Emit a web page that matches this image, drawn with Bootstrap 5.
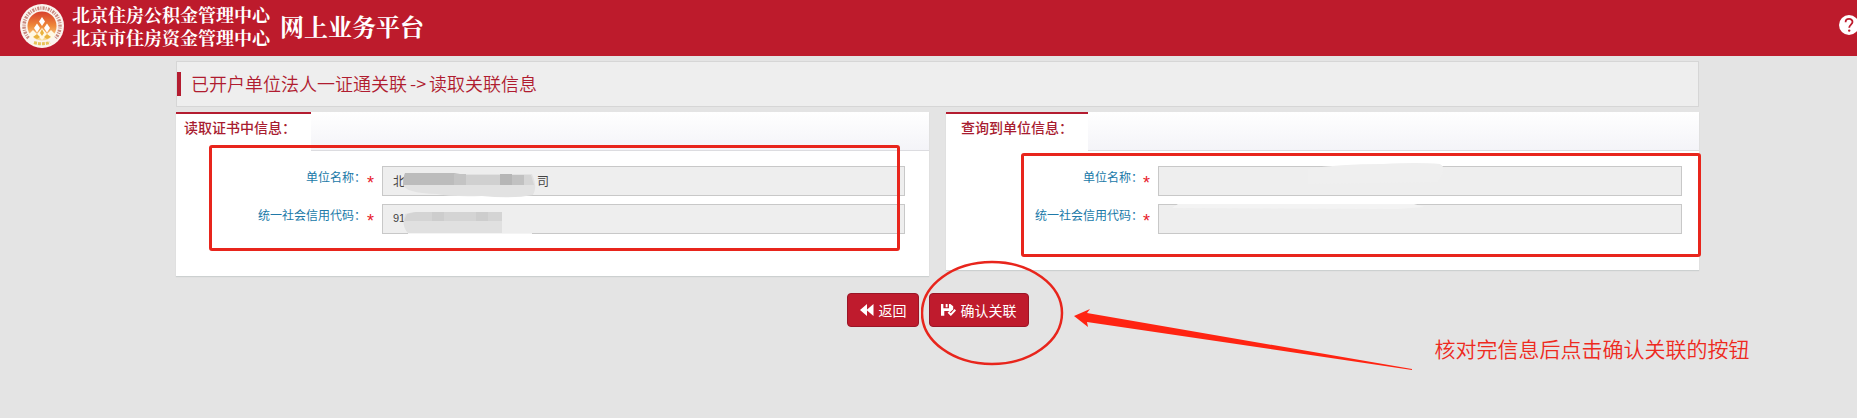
<!DOCTYPE html>
<html lang="zh-CN">
<head>
<meta charset="utf-8">
<meta name="viewport" content="width=device-width, initial-scale=1">
<title>网上业务平台</title>
<link rel="stylesheet" href="https://cdn.jsdelivr.net/npm/bootstrap@5.3.0/dist/css/bootstrap.min.css">
<style>
  body { background: #e4e4e4; font-family: "Noto Sans CJK SC", sans-serif; font-size: 12px; color: #444; }
  .topbar { background: #bd1b2c; height: 56px; padding-left: 20px; }
  .org-name { font-family: "Noto Serif CJK SC", "Noto Sans CJK SC", serif; font-size: 18px; line-height: 23px; font-weight: 700; margin-left: 8px; margin-bottom: 4px; }
  .site-name { font-family: "Noto Serif CJK SC", "Noto Sans CJK SC", serif; font-size: 24px; line-height: 32px; font-weight: 700; margin-left: 10px; margin-bottom: 4px; }
  .help-link { margin-right: -2px; margin-bottom: 6px; }
  .page-body { padding: 5px 158px 0 176px; }
  .title-strip { background: #eee; border: 1px solid #d6d6d6; height: 46px; margin-bottom: 5px; }
  .title-strip h1 { font-size: 18px; line-height: 22px; font-weight: 350; color: #b01c30; border-left: 4px solid #b41c30; padding: 0 0 2px 10px; margin: 0; }
  .arrow-text { margin: 0 3px; }
  .panels { gap: 17px; }
  .panel { flex: 1 1 0; min-width: 0; background: #fff; box-shadow: 0 1px 1px #ccd0d0; }
  .panel-read { padding-bottom: 42px; }
  .panel-query { padding-bottom: 36px; }
  .panel-top { height: 39px; background: linear-gradient(#fff, #f4f4f8); border-bottom: 1px solid #dcdce0; }
  .panel-top h2 { height: 39px; background: #fff; border-top: 2px solid #b41c30; font-size: 14px; line-height: 26px; font-weight: 500; color: #a81c30; margin: 0; padding: 0 15px; }
  .panel-read h2 { padding-left: 8px; }
  .panel-form { padding: 15px 17px 0 0; }
  .panel-read .panel-form { padding-right: 24px; }
  .field { height: 30px; margin-bottom: 8px; }
  .field:last-child { margin-bottom: 0; }
  .field label { width: 197px; line-height: 22px; color: #2079a8; }
  .field .req { width: 15px; line-height: 34px; color: #e8202a; font-size: 18px; font-family: "Liberation Sans", sans-serif; }
  .panel-read .field label { width: 190px; }
  .panel-read .field .req { width: 16px; padding-left: 1px; }
  .field input { height: 30px; background: #eee; border: 1px solid #c8c8c8; border-radius: 0; font-size: 12px; padding: 0 10px 2px; color: #444; }
  .field .code-value { font-size: 11px; font-family: "Liberation Sans", "Noto Sans CJK SC", sans-serif; }
  .redact { left: 20px; top: 0; }
  .smudge { left: 0; top: -4px; }
  .actions { gap: 10px; margin-top: 17px; }
  .btn-red { height: 34px; font-size: 14px; line-height: 20px; color: #fff; background: #bf1b2d; border: 1px solid #9a1526; border-radius: 4px; padding: 0 11px; gap: 5px; }
  .btn-red:hover { background: #a81726; color: #fff; }
  .mark-box { border: 3px solid #e8251c; border-radius: 3px; pointer-events: none; }
  .mark-read { left: 33px; right: 29px; top: 33px; bottom: 25px; }
  .mark-query { left: 75px; right: -2px; top: 41px; bottom: 13px; }
  .mark-circle { left: -8px; top: -33px; pointer-events: none; }
  .mark-arrow { left: 144px; top: 14px; pointer-events: none; }
  .mark-note { left: 506px; top: 39px; font-size: 21px; line-height: 32px; font-weight: 350; color: #ee2a1e; }
</style>
<script src="https://cdn.jsdelivr.net/npm/bootstrap@5.3.0/dist/js/bootstrap.bundle.min.js"></script>
</head>
<body class="min-vh-100">
<header class="topbar d-flex align-items-center text-white overflow-hidden">
  <svg width="44" height="44" viewBox="0 0 44 44" class="flex-shrink-0 mb-1" aria-hidden="true">
    <defs><linearGradient id="seal" x1="0" y1="0" x2="0" y2="1"><stop offset="0" stop-color="#d8402c"/><stop offset=".5" stop-color="#ef8a3a"/><stop offset="1" stop-color="#fbe3a0"/></linearGradient></defs>
    <circle cx="22" cy="22" r="22" fill="#fbf4ee"/>
    <path d="M8.500 34A18 18 0 1 1 35.500 34" fill="none" stroke="#c98a80" stroke-width="3.500" stroke-dasharray="2 1 1 1.200"/>
    <path d="M14 38.500Q22 41 30 38.500" fill="none" stroke="#e8c45a" stroke-width="3" stroke-dasharray="3 1"/>
    <circle cx="22" cy="22" r="14.500" fill="url(#seal)"/>
    <path d="M22 13l3 4.500-3 4.500-3-4.500zM17 19.500l3 4.500-3 4.500-3-4.500zM27 19.500l3 4.500-3 4.500-3-4.500z" fill="#fff"/>
    <path d="M8 31l5-5 4 4 5-6 5 6 4-4 5 5-5 4-4-4-5 5-5-5-4 4z" fill="#fff8e4"/>
    <path d="M13 33l4-3 3 3-3 2zM31 33l-4-3-3 3 3 2zM22 25l2 4-2 3-2-3z" fill="#e9b23c"/>
  </svg>
  <div class="org-name text-nowrap">北京住房公积金管理中心<br>北京市住房资金管理中心</div>
  <div class="site-name text-nowrap">网上业务平台</div>
  <a href="#" class="help-link ms-auto d-flex" aria-label="帮助">
    <svg width="20" height="20" viewBox="0 0 20 20"><circle cx="10" cy="10" r="10" fill="#fff"/><path d="M6.600 7.200C6.600 2.800 13.600 2.900 13.500 7c0 2.500-3.300 2.700-3.300 5.800" fill="none" stroke="#bd1b2c" stroke-width="1.800"/><circle cx="10.200" cy="15.600" r="1.200" fill="#bd1b2c"/></svg>
  </a>
</header>

<main class="page-body">
  <div class="title-strip d-flex align-items-center">
    <h1 class="text-nowrap">已开户单位法人一证通关联<span class="arrow-text">-&gt;</span>读取关联信息</h1>
  </div>

  <div class="panels d-flex align-items-start">
    <section class="panel panel-read position-relative">
      <div class="panel-top d-flex"><h2>读取证书中信息：</h2></div>
      <form class="panel-form">
        <div class="field d-flex">
          <label for="read-name" class="text-end text-nowrap flex-shrink-0">单位名称：</label><span class="req flex-shrink-0">*</span>
          <div class="position-relative flex-grow-1">
            <input id="read-name" type="text" class="form-control" readonly value="北　　　　　　　　　　　司">
            <svg class="redact position-absolute" width="136" height="32" aria-hidden="true">
              <path d="M3 8H130Q136 20 131 29Q110 33 80 30Q50 31 35 28Q2 27 1 18Z" fill="#e2e2e2"/>
              <path d="M3 7H52L64 9V19H1Q1 11 3 7Z" fill="#bcbcbc"/>
              <path d="M52 8H64V19H52Z" fill="#c4c4c4"/><path d="M64 9H98V19H64Z" fill="#d0d0d0"/>
              <path d="M98 8H110V19H98Z" fill="#b6b6b6"/><path d="M110 9H122V19H110Z" fill="#c1c1c1"/><path d="M122 9H129L132 19H122Z" fill="#d5d5d5"/>
            </svg>
          </div>
        </div>
        <div class="field d-flex">
          <label for="read-code" class="text-end text-nowrap flex-shrink-0">统一社会信用代码：</label><span class="req flex-shrink-0">*</span>
          <div class="position-relative flex-grow-1">
            <input id="read-code" type="text" class="form-control code-value" readonly value="91">
            <svg class="redact position-absolute" width="132" height="31" aria-hidden="true">
              <path d="M3 10L12 8H100V29H6Q-1 22 3 10Z" fill="#e0e0e0"/>
              <path d="M5 10L14 8H100V17H2Z" fill="#d4d4d4"/><path d="M30 8H42V17H30ZM74 8H86V17H74Z" fill="#cdcdcd"/>
              <path d="M6 29H130V30H6Z" fill="#f4f4f4"/>
            </svg>
          </div>
        </div>
      </form>
      <div class="mark-box mark-read position-absolute"></div>
    </section>

    <section class="panel panel-query position-relative">
      <div class="panel-top d-flex"><h2>查询到单位信息：</h2></div>
      <form class="panel-form">
        <div class="field d-flex">
          <label for="query-name" class="text-end text-nowrap flex-shrink-0">单位名称：</label><span class="req flex-shrink-0">*</span>
          <div class="position-relative flex-grow-1">
            <input id="query-name" type="text" class="form-control" readonly>
            <svg class="smudge position-absolute" width="290" height="32" aria-hidden="true"><path d="M150 7Q180 2 225 2Q260 0 282 2Q290 6 280 20L150 22Z" fill="#efefef"/></svg>
          </div>
        </div>
        <div class="field d-flex">
          <label for="query-code" class="text-end text-nowrap flex-shrink-0">统一社会信用代码：</label><span class="req flex-shrink-0">*</span>
          <div class="position-relative flex-grow-1">
            <input id="query-code" type="text" class="form-control" readonly>
            <svg class="smudge position-absolute" width="270" height="12" aria-hidden="true"><path d="M20 4H256L266 7L240 9L14 8Z" fill="#f3f3f3"/></svg>
          </div>
        </div>
      </form>
      <div class="mark-box mark-query position-absolute"></div>
    </section>
  </div>

  <div class="actions d-flex justify-content-center">
    <button type="button" class="btn btn-red d-flex align-items-center text-nowrap">
      <svg width="15" height="14" viewBox="0 0 15 14" fill="#fff" aria-hidden="true"><path d="M8 1v12L1 7zM14.500 1v12L7.500 7z"/></svg>返回
    </button>
    <div class="position-relative">
      <button type="button" class="btn btn-red d-flex align-items-center text-nowrap">
        <svg width="15" height="14" viewBox="0 0 16 14" fill="#fff" aria-hidden="true"><path d="M0 .5h2.500V5h6V.500h1.500L13 3v3.500L9.500 9.500 8 8H3.500v5H0zM5 .500h2V4H5z"/><path d="M7 10l1.500-1.500 2 2L14.500 6 16 7.500 10.500 13.500z"/></svg>确认关联
      </button>
      <svg class="mark-circle position-absolute" width="143" height="106" aria-hidden="true"><ellipse cx="71" cy="53" rx="70" ry="51" fill="none" stroke="#e8251c" stroke-width="2.500"/></svg>
      <svg class="mark-arrow position-absolute" width="342" height="66" aria-hidden="true"><path d="M1 9L17 2L14 6L339 62V63L14 15L15 20Z" fill="#ff2412"/></svg>
      <div class="mark-note position-absolute text-nowrap">核对完信息后点击确认关联的按钮</div>
    </div>
  </div>
</main>
</body>
</html>
